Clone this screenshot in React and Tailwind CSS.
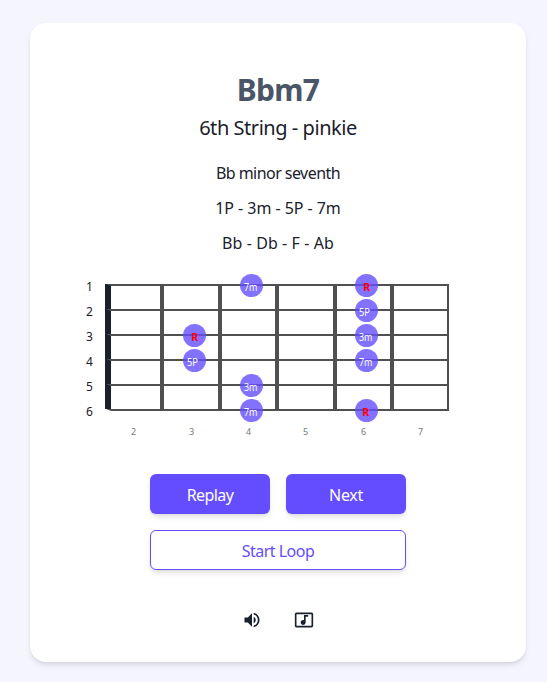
import { MdVolumeUp, MdMusicVideo } from "react-icons/md";

const strings = [285, 310, 335, 360, 385, 410];
const frets = [162, 220, 277, 335, 392];
const fretLabels = [
  [133.5, 2],
  [191.5, 3],
  [248.5, 4],
  [305.5, 5],
  [363.5, 6],
  [420.5, 7],
];
const notes = [
  [251.5, 285.5, "7m", 244, 13.5],
  [366.5, 285.5, "R", 363.2, 7],
  [366.5, 310.5, "5P", 359, 11],
  [194.5, 335.5, "R", 191.2, 7],
  [366.5, 335.5, "3m", 359, 13.5],
  [194.5, 360.5, "5P", 187, 11],
  [366.5, 360.5, "7m", 359, 13.5],
  [251.5, 385.5, "3m", 244, 13.5],
  [251.5, 410.5, "7m", 244, 13.5],
  [366.5, 410.5, "R", 362.2, 7],
];

function Fretboard() {
  return (
    <svg width="400" height="180" viewBox="78 265 400 180" className="block shrink-0">
      <rect x="105" y="284" width="6" height="125" fill="#1a202c" />
      {frets.map((x) => (
        <rect key={x} x={x - 2} y="284" width="4" height="127" fill="#505050" />
      ))}
      <rect x="447" y="284" width="2" height="127" fill="#505050" />
      {strings.map((y, i) => (
        <g key={y}>
          <path d={`M106 ${y - 1}H449V${y + 1}H111Z`} fill="#505050" />
          <text x="89.5" y={y + 6} textAnchor="middle" fontSize="12" fill="#1a202c">
            {i + 1}
          </text>
        </g>
      ))}
      {fretLabels.map(([x, n]) => (
        <text key={n} x={x} y="435" textAnchor="middle" fontSize="9" fill="#777777">
          {n}
        </text>
      ))}
      {notes.map(([cx, cy, label, x, w]) => (
        <g key={`${cx}-${cy}`}>
          <circle cx={cx} cy={cy} r="11.5" fill="#644dff" fillOpacity="0.8" />
          <text
            x={x}
            y={cy + 5.5}
            textLength={w}
            lengthAdjust="spacingAndGlyphs"
            fontSize="10"
            fontWeight={label === "R" ? 700 : 400}
            fill={label === "R" ? "#ff0000" : "#ffffff"}
          >
            {label}
          </text>
        </g>
      ))}
    </svg>
  );
}

export default function App() {
  return (
    <div className="h-[682px] w-[547px] bg-[#f5f5ff] pl-[30px] pt-[23px] font-['Noto_Sans',sans-serif] text-[#1a202c]">
      <main className="flex h-[639px] w-[496px] flex-col items-center rounded-2xl bg-white pt-[47px] shadow-md">
        <h1 className="h-[41px] text-[30px] font-bold leading-[40px] tracking-[-0.7px] text-[#4a5568]">Bbm7</h1>
        <h2 className="h-[34px] text-[20px] leading-[34px] tracking-[-0.45px]">6th String - pinkie</h2>
        <div className="mt-4 flex flex-col gap-[11px] text-center text-base leading-6">
          <p className="tracking-[-0.55px]">Bb minor seventh</p>
          <p className="tracking-[-0.05px]">1P - 3m - 5P - 7m</p>
          <p className="tracking-[0.08px]">Bb - Db - F - Ab</p>
        </div>
        <div className="mt-[10px]">
          <Fretboard />
        </div>
        <div className="mt-[29px] grid w-64 grid-cols-2 gap-4 text-base">
          <button className="h-10 rounded-md bg-[#644dff] pt-[2px] tracking-[-0.6px] text-white shadow-md">Replay</button>
          <button className="h-10 rounded-md bg-[#644dff] pt-[2px] tracking-[-0.3px] text-white shadow-md">Next</button>
          <button className="col-span-2 h-10 rounded-md border border-[#644dff] bg-white pt-[2px] tracking-[-0.5px] text-[#644dff] shadow-md">
            Start Loop
          </button>
        </div>
        <div className="mt-10 flex gap-8">
          <MdVolumeUp size={20} />
          <MdMusicVideo size={20} />
        </div>
      </main>
    </div>
  );
}
